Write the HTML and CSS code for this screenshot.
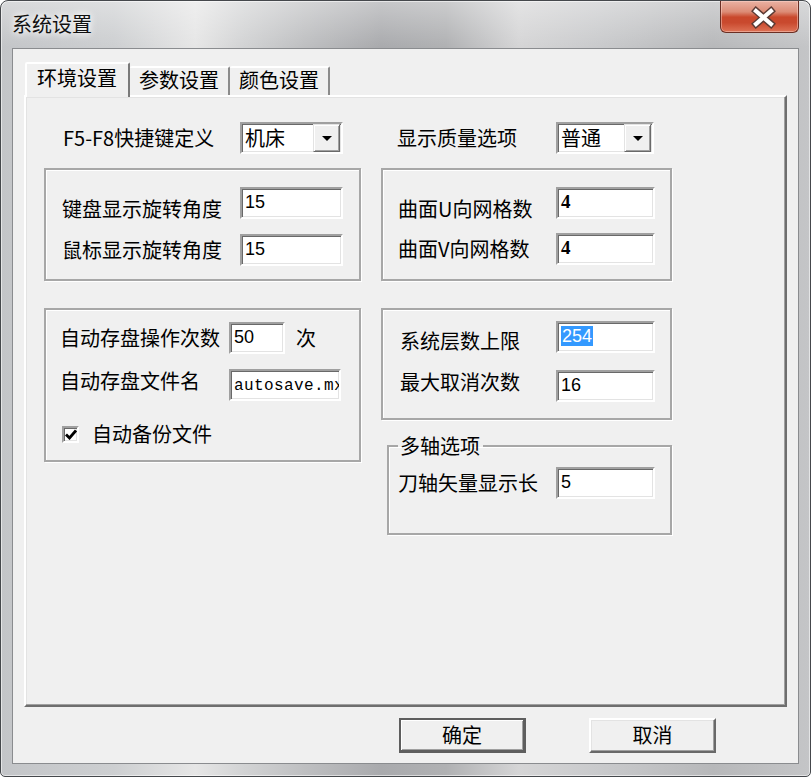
FILE: index.html
```html
<!DOCTYPE html>
<html lang="zh-CN">
<head>
<meta charset="utf-8">
<title>系统设置</title>
<link rel="stylesheet" href="styles.css">
</head>
<body>
<div class="window">
  <div class="titlebar">
    <div class="title">系统设置</div>
    <div class="close">
      <svg width="79" height="32" viewBox="0 0 79 32">
        <path d="M35 10 L50 23 M50 10 L35 23" stroke="#5a3a34" stroke-width="7" stroke-linecap="square" fill="none"/>
        <path d="M35 10 L50 23 M50 10 L35 23" stroke="#ffffff" stroke-width="4.2" stroke-linecap="square" fill="none"/>
      </svg>
    </div>
  </div>
  <div class="client">
    <div class="tabstrip">
      <div class="tab active">环境设置</div>
      <div class="tab">参数设置</div>
      <div class="tab">颜色设置</div>
    </div>
    <div class="page">
      <div class="grid">
        <div class="toprow tl">
          <span class="lbl">F5-F8快捷键定义</span>
          <div class="combo cl"><span class="ctext">机床</span><span class="arrow"><svg width="10" height="5" viewBox="0 0 10 5"><path d="M0 0H10L5 5Z" fill="#000"/></svg></span></div>
        </div>
        <div class="toprow tr">
          <span class="lbl">显示质量选项</span>
          <div class="combo cr"><span class="ctext">普通</span><span class="arrow"><svg width="10" height="5" viewBox="0 0 10 5"><path d="M0 0H10L5 5Z" fill="#000"/></svg></span></div>
        </div>

        <div class="group g1">
          <div class="field">
            <span class="lbl low">键盘显示旋转角度</span>
            <div class="edit wl">15</div>
          </div>
          <div class="field">
            <span class="lbl">鼠标显示旋转角度</span>
            <div class="edit wl">15</div>
          </div>
        </div>
        <div class="group g2">
          <div class="field">
            <span class="lbl low">曲面U向网格数</span>
            <div class="edit wr serif">4</div>
          </div>
          <div class="field f2">
            <span class="lbl">曲面V向网格数</span>
            <div class="edit wr serif">4</div>
          </div>
        </div>

        <div class="group g3">
          <div class="field">
            <span class="lbl">自动存盘操作次数</span>
            <div class="edit wn">50</div>
            <span class="unit">次</span>
          </div>
          <div class="field f2">
            <span class="lbl high">自动存盘文件名</span>
            <div class="edit wf mono">autosave.mx</div>
          </div>
          <div class="checkrow">
            <span class="checkbox"><svg width="12" height="11" viewBox="0 0 12 11"><path d="M1 5.5 L4.5 9 L11 1.5" stroke="#000" stroke-width="2.8" fill="none"/></svg></span>
            <span class="lbl">自动备份文件</span>
          </div>
        </div>

        <div class="stack">
          <div class="group g4">
            <div class="field">
              <span class="lbl low2">系统层数上限</span>
              <div class="edit wr"><span class="sel">254</span></div>
            </div>
            <div class="field f3">
              <span class="lbl high">最大取消次数</span>
              <div class="edit wr">16</div>
            </div>
          </div>
          <fieldset class="g5">
            <legend>多轴选项</legend>
            <div class="field">
              <span class="lbl">刀轴矢量显示长</span>
              <div class="edit wr">5</div>
            </div>
          </fieldset>
        </div>
      </div>
    </div>
    <div class="buttons">
      <div class="btn default">确定</div>
      <div class="btn">取消</div>
    </div>
  </div>
</div>
</body>
</html>
```
FILE: styles.css
```css
* { box-sizing: border-box; }
html, body { margin: 0; padding: 0; }
body {
  width: 811px;
  height: 777px;
  overflow: hidden;
  background: #ffffff;
  font-family: "Noto Sans CJK SC", "Noto Sans", sans-serif;
  font-size: 20px;
  line-height: 24px;
  color: #000;
}

.window {
  width: 811px;
  height: 777px;
  border: 1px solid #45484c;
  border-radius: 8px 8px 5px 5px;
  background:
    linear-gradient(180deg, rgba(255,255,255,0.35) 0px, rgba(255,255,255,0) 46px),
    linear-gradient(90deg, #c3c5c8 0%, #cdcfd1 14%, #e6e6e6 24%, #d2d3d4 30%, #bdbec0 38%, #a9aaad 47%, #b0b1b3 55%, #d5d5d6 64%, #c9cacc 74%, #b7b8ba 88%, #c4c5c7 100%);
  box-shadow: inset 0 0 0 1px rgba(255,255,255,0.55);
  display: flex;
  flex-direction: column;
  padding: 0 11px 12px 11px;
}

.titlebar {
  height: 47px;
  display: flex;
  justify-content: space-between;
  align-items: flex-start;
}
.title {
  margin-top: 11px;
  font-size: 20px;
  line-height: 24px;
  color: #111;
  text-shadow: 0 0 6px #fff, 0 0 10px #fff;
}
.close {
  width: 79px;
  height: 32px;
  border: 1px solid #6b2f24;
  border-top: none;
  border-radius: 0 0 6px 6px;
  background: linear-gradient(180deg, #e9b2a3 0%, #dc8c76 35%, #c9482c 52%, #c9492e 70%, #de7357 100%);
  box-shadow: inset 0 0 0 1px rgba(255,220,210,0.45);
}
.close svg { display: block; }

.client {
  flex: 1;
  border: 1px solid #8a8c8f;
  background: #f0f0f0;
  padding: 13px 11px 0 11px;
  display: flex;
  flex-direction: column;
}

.tabstrip {
  height: 33px;
  display: flex;
  align-items: flex-end;
  padding-left: 1px;
}
.tab {
  height: 29px;
  border-style: solid;
  border-width: 2px 2px 0 0;
  border-color: #ffffff #8b8b8b transparent transparent;
  border-radius: 2px 2px 0 0;
  padding: 0 9px 0 9px;
  line-height: 24px;
  background: #f0f0f0;
  white-space: nowrap;
}
.tab.active {
  height: 35px;
  margin-bottom: -2px;
  border-width: 2px 2px 0 2px;
  border-color: #ffffff #7a7a7a transparent #ffffff;
  padding: 2px 11px 0 10px;
  position: relative;
  z-index: 1;
}

.page {
  height: 612px;
  border: 2px solid;
  border-color: #ffffff #6e6e6e #6e6e6e #ffffff;
  box-shadow: inset -1px -1px 0 #a0a0a0, inset 1px 1px 0 #e3e3e3;
  padding: 25px 0 0 18px;
}

.grid {
  display: grid;
  grid-template-columns: 317px 291px;
  column-gap: 20px;
  align-items: start;
}

.lbl { white-space: nowrap; line-height: 24px; }
.low { padding-top: 12px; }
.low2 { padding-top: 8px; }
.high { padding-bottom: 8px; }

.toprow {
  height: 32px;
  display: flex;
  align-items: center;
}
.toprow.tl { padding-left: 19px; }
.toprow.tl .lbl { width: 177px; }
.toprow.tr { padding-left: 16px; }
.toprow.tr .lbl { width: 159px; }

.combo {
  height: 32px;
  display: flex;
  align-items: stretch;
  background: #fff;
  border: 2px solid;
  border-color: #a0a0a0 #ffffff #ffffff #a0a0a0;
  box-shadow: inset 1px 1px 0 #696969, inset -1px -1px 0 #e3e3e3;
}
.combo.cl { width: 103px; }
.combo.cr { width: 98px; }
.ctext { flex: 1; padding-left: 3px; line-height: 28px; }
.arrow {
  width: 27px;
  margin: 0 1px 0 0;
  background: #f0f0f0;
  border: 1px solid;
  border-color: #e3e3e3 #696969 #696969 #e3e3e3;
  box-shadow: inset 1px 1px 0 #ffffff, inset -1px -1px 0 #a0a0a0;
  display: flex;
  align-items: center;
  justify-content: center;
}
.arrow svg { display: block; }

.group {
  border: 2px solid #a7a7a7;
  box-shadow: inset 1px 1px 0 #ffffff, 1px 1px 0 #ffffff;
}
.g1, .g2 { margin-top: 14px; height: 113px; padding: 17px 0 0 16px; }
.g1 .lbl { width: 178px; }
.g2 { padding-left: 15px; }
.g2 .lbl { width: 158px; }
.g1 .field + .field { margin-top: 15px; }
.g2 .field + .field { margin-top: 14px; }

.g3 { margin-top: 27px; height: 154px; padding: 12px 0 0 14px; }
.g3 .lbl { width: 169px; }
.g3 .f2 { margin-top: 15px; }
.stack { margin-top: 27px; }
.g4 { height: 112px; padding: 11px 0 0 17px; }
.g4 .lbl { width: 156px; }
.g4 .f3 { margin-top: 17px; }

.field {
  height: 32px;
  display: flex;
  align-items: center;
}

.edit {
  height: 32px;
  background: #fff;
  border: 2px solid;
  border-color: #a0a0a0 #ffffff #ffffff #a0a0a0;
  box-shadow: inset 1px 1px 0 #696969, inset -1px -1px 0 #e3e3e3;
  font-family: "Liberation Sans", "DejaVu Sans", sans-serif;
  font-size: 18px;
  line-height: 24px;
  padding: 1px 0 0 3px;
  white-space: nowrap;
  overflow: hidden;
}
.edit.serif { font-family: "Liberation Serif", serif; font-weight: bold; font-size: 19px; }
.edit.mono { font-family: "Liberation Mono", monospace; font-size: 16px; letter-spacing: 0.4px; padding-top: 3px; }
.wl { width: 103px; }
.wr { width: 99px; }
.wn { width: 56px; }
.wf { width: 112px; }
.unit { margin-left: 11px; }
.sel { background: #3399ff; color: #fff; padding: 0 1px; }

.checkrow {
  margin-top: 23px;
  height: 20px;
  display: flex;
  align-items: center;
  padding-left: 2px;
}
.checkbox {
  width: 17px;
  height: 17px;
  background: #fff;
  border: 2px solid;
  border-color: #a0a0a0 #ffffff #ffffff #a0a0a0;
  box-shadow: inset 1px 1px 0 #696969, inset -1px -1px 0 #e3e3e3;
  display: flex;
  align-items: center;
  justify-content: center;
  margin-right: 13px;
}
.checkbox svg { display: block; }

fieldset.g5 {
  margin: 15px 0 0 6px;
  width: 285px;
  height: 100px;
  border: 2px solid #a7a7a7;
  box-shadow: inset 1px 1px 0 #ffffff, 1px 1px 0 #ffffff;
  padding: 10px 0 0 9px;
  min-width: 0;
}
fieldset.g5 legend {
  padding: 0 3px 0 2px;
  line-height: 22px;
  font-size: 20px;
}
.g5 .lbl { width: 158px; }

.buttons {
  margin-top: 11px;
  display: flex;
  justify-content: flex-end;
  gap: 63px;
  padding-right: 71px;
}
.btn {
  width: 127px;
  height: 35px;
  background: #f0f0f0;
  border: 2px solid;
  border-color: #ffffff #696969 #696969 #ffffff;
  box-shadow: inset -1px -1px 0 #a0a0a0, inset 1px 1px 0 #e3e3e3;
  text-align: center;
  line-height: 30px;
}
.btn.default {
  border: 2px solid #5e5e5e;
  border-right-width: 3px;
  border-bottom-width: 3px;
  box-shadow: inset 1px 1px 0 #ffffff, inset -1px -1px 0 #a0a0a0;
  line-height: 29px;
}
```
